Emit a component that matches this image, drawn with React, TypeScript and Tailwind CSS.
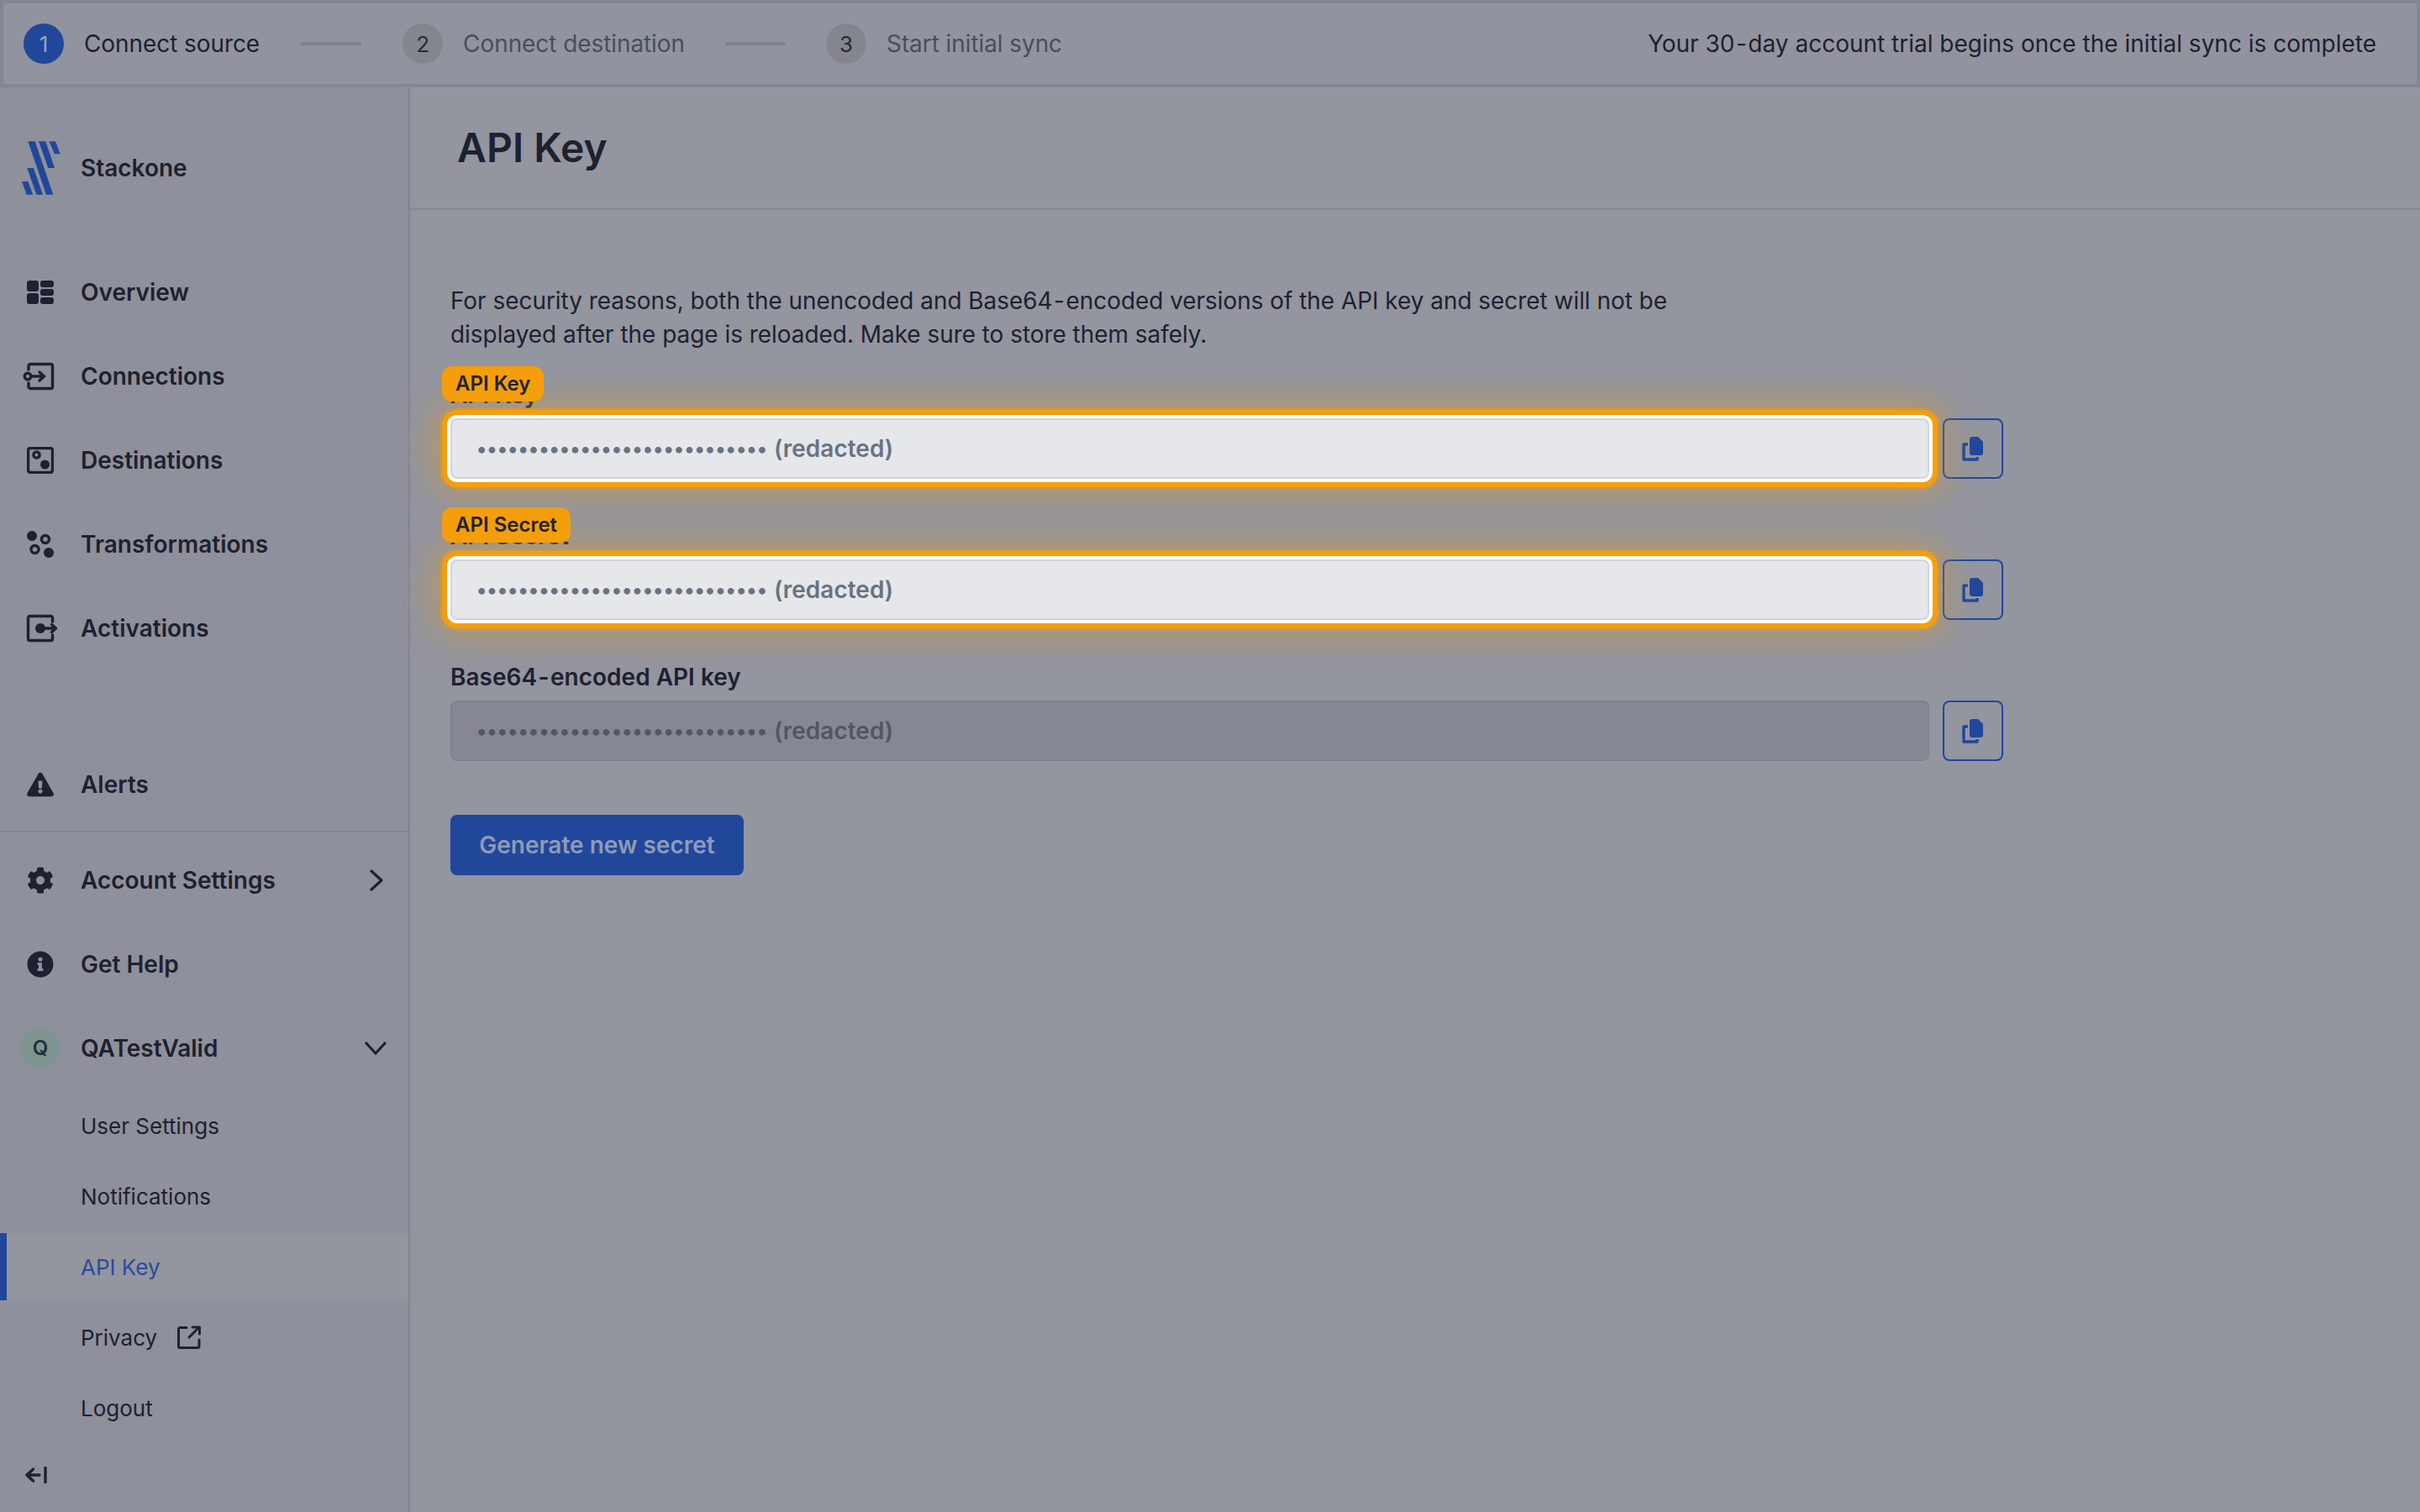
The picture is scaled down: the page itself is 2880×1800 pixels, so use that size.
import React from "react";
import { FaCog, FaInfoCircle, FaExclamationTriangle } from "react-icons/fa";

const DARK = "#1e2130";

function LogoMark() {
  return (
    <svg width="46" height="64" viewBox="26 168 46 64" fill="#21479b">
      <polygon points="33.3,168.3 41.7,168.3 63.3,231.7 55,231.7" />
      <polygon points="46,168.3 54.3,168.3 65,200 57.3,200" />
      <polygon points="58.3,168.3 66,168.3 71.7,183.3 65,183.3" />
      <polygon points="32.3,200 40,200 51,231.7 43.3,231.7" />
      <polygon points="26,216 33.3,216 39.3,231.7 31.7,231.7" />
    </svg>
  );
}

function OverviewIcon() {
  return (
    <svg width="32" height="32" viewBox="0 0 32 32" fill={DARK}>
      <rect x="0" y="2" width="14" height="13" rx="3" />
      <rect x="0" y="17" width="14" height="13" rx="3" />
      <rect x="16" y="2" width="16" height="8" rx="3" />
      <rect x="16" y="12" width="16" height="8" rx="3" />
      <rect x="16" y="22" width="16" height="8" rx="3" />
    </svg>
  );
}

function ConnectionsIcon() {
  return (
    <svg width="32" height="32" viewBox="0 0 32 32" fill="none" stroke={DARK} strokeWidth="3.4" strokeLinecap="round" strokeLinejoin="round" className="overflow-visible">
      <path d="M2 8V3.5A2 2 0 0 1 4 1.5H28.5A2 2 0 0 1 30.5 3.5V28.5A2 2 0 0 1 28.5 30.5H4A2 2 0 0 1 2 28.5V24" />
      <circle cx="1" cy="16" r="3.8" />
      <path d="M5 16H20M15 11L20.5 16L15 21" />
    </svg>
  );
}

function DestinationsIcon() {
  return (
    <svg width="32" height="32" viewBox="0 0 32 32" fill="none" stroke={DARK} strokeWidth="3.4">
      <rect x="1.5" y="1.5" width="29" height="29" rx="2.5" />
      <circle cx="11.5" cy="9.5" r="3.6" />
      <circle cx="21.5" cy="21" r="5.5" fill={DARK} stroke="none" />
    </svg>
  );
}

function TransformationsIcon() {
  return (
    <svg width="32" height="32" viewBox="0 0 32 32" fill="none" stroke={DARK} strokeWidth="3.4">
      <circle cx="6" cy="6" r="6" fill={DARK} stroke="none" />
      <circle cx="22" cy="10" r="4.5" />
      <circle cx="9.5" cy="22" r="4.5" />
      <circle cx="26" cy="26" r="6" fill={DARK} stroke="none" />
    </svg>
  );
}

function ActivationsIcon() {
  return (
    <svg width="32" height="32" viewBox="0 0 32 32" fill="none" stroke={DARK} strokeWidth="3.4" strokeLinecap="round" strokeLinejoin="round" className="overflow-visible">
      <path d="M30.5 8V3.5A2 2 0 0 0 28.5 1.5H3.5A2 2 0 0 0 1.5 3.5V28.5A2 2 0 0 0 3.5 30.5H28.5A2 2 0 0 0 30.5 28.5V24" />
      <circle cx="16" cy="16" r="6" fill={DARK} stroke="none" />
      <path d="M20 16H34M29.5 11.5L34.5 16L29.5 20.5" />
    </svg>
  );
}

function ChevronRight() {
  return (
    <svg width="16" height="26" viewBox="0 0 16 26" fill="none" stroke={DARK} strokeWidth="3.2" strokeLinecap="round" strokeLinejoin="round" className="ml-[2px]">
      <path d="M2 2L14 13L2 24" />
    </svg>
  );
}

function ChevronDown() {
  return (
    <svg width="26" height="16" viewBox="0 0 26 16" fill="none" stroke={DARK} strokeWidth="3.2" strokeLinecap="round" strokeLinejoin="round">
      <path d="M2 2L13 14L24 2" />
    </svg>
  );
}

function ExternalIcon() {
  return (
    <svg width="28" height="28" viewBox="0 0 28 28" fill="none" stroke={DARK} strokeWidth="3" strokeLinecap="round" strokeLinejoin="round">
      <path d="M11 2.5H3.5A2 2 0 0 0 1.5 4.5V24.5A2 2 0 0 0 3.5 26.5H24A2 2 0 0 0 26 24.5V17" />
      <path d="M14 14L26 2M18 2H26.5V10" />
    </svg>
  );
}

function CollapseIcon() {
  return (
    <svg width="26" height="20" viewBox="0 0 26 20" fill="none" stroke={DARK} strokeWidth="3.4" strokeLinecap="round" strokeLinejoin="round">
      <path d="M2 10H17M9.5 3L2 10L9.5 17M24 1.5V18.5" />
    </svg>
  );
}

function CopyIcon() {
  return (
    <svg width="26" height="29" viewBox="0 0 26 29" fill="none">
      <path d="M12 0H19L25 6V19A3 3 0 0 1 22 22H12A3 3 0 0 1 9 19V3A3 3 0 0 1 12 0Z" fill="#21479b" />
      <path d="M7 9H2V27H18V24" stroke="#21479b" strokeWidth="3.5" strokeLinejoin="round" />
    </svg>
  );
}

function Hyphen() {
  return <span className="mx-[1.5px]">-</span>;
}

function Step({ n, label, active }: { n: number; label: string; active?: boolean }) {
  return (
    <div className="flex items-center gap-6">
      <div
        className={
          active
            ? "flex h-12 w-12 items-center justify-center rounded-full bg-[#21479b] text-[26px] text-[#98a4c4]"
            : "flex h-12 w-12 items-center justify-center rounded-full bg-[#83868f] text-[26px] text-[#262935]"
        }
      >
        {n}
      </div>
      <span className={active ? "text-[28px] tracking-[-0.08px] text-[#1e2130]" : "text-[28px] tracking-[-0.08px] text-[#4a4e5b]"}>{label}</span>
    </div>
  );
}

function StepLine({ first }: { first?: boolean }) {
  return <div className={first ? "mx-[49px] h-1 w-[72px] bg-[#81848f]" : "mx-12 h-1 w-[72px] bg-[#81848f]"} />;
}

function NavRow({ icon, label, trailing }: { icon: React.ReactNode; label: string; trailing?: React.ReactNode }) {
  return (
    <div className="relative flex h-[100px] items-center pl-8 pr-[23px]">
      <div className="flex h-8 w-8 shrink-0 items-center justify-center">{icon}</div>
      <span className="ml-8 text-[28px] font-semibold text-[#1e2130]">{label}</span>
      {trailing ? <div className="ml-auto flex w-[32px] justify-center">{trailing}</div> : null}
    </div>
  );
}

function SubRow({ label, active, trailing }: { label: string; active?: boolean; trailing?: React.ReactNode }) {
  return (
    <div
      className={
        active
          ? "flex h-20 items-center border-l-8 border-[#21479b] bg-[#93959f] pl-[88px] text-[26px] text-[#2a4c9c]"
          : "flex h-20 items-center pl-24 text-[26px] text-[#1e2130]"
      }
    >
      <span>{label}</span>
      {trailing}
    </div>
  );
}

function RedactedBox({ highlight }: { highlight?: boolean }) {
  return (
    <div
      className={
        highlight
          ? "relative flex h-[72px] w-[1760px] items-center rounded-lg border-2 border-[#d2d4db] bg-[#e5e7eb] pl-[29px] text-[28px] font-semibold text-[#6b7280] shadow-[0_0_0_4px_#ffffff,0_0_0_10px_#f59e0b,0_0_0_12px_rgba(245,158,11,0.4),0_0_40px_16px_rgba(245,158,11,0.45)]"
          : "flex h-[72px] w-[1760px] items-center rounded-lg border-2 border-[#7f828e] bg-[#858893] pl-[29px] text-[28px] font-semibold text-[#525665]"
      }
    >
      <span className="text-[24.55px]">••••••••••••••••••••••••••••</span>
      <span className="ml-[8px]">(redacted)</span>
    </div>
  );
}

function Field({ label, highlight }: { label: React.ReactNode; highlight?: boolean }) {
  return (
    <div className="relative mb-12">
      <div className="h-10 text-[28px] font-semibold leading-10 text-[#1e2130]">{label}</div>
      <div className="mt-2 flex gap-4">
        <RedactedBox highlight={highlight} />
        <div className="flex h-[72px] w-[72px] items-center justify-center rounded-lg border-2 border-[#21479b]">
          <CopyIcon />
        </div>
      </div>
      {highlight ? (
        <div className="absolute -left-[10px] -top-[14px] rounded-xl bg-[#f59e0b] px-4 text-[24px] font-semibold leading-[42px] text-[#1f2229]">
          {label}
        </div>
      ) : null}
    </div>
  );
}

export default function App() {
  return (
    <div className="flex h-screen w-screen flex-col overflow-hidden bg-[#93959f] font-[family-name:Inter,sans-serif]">
      <header className="flex h-[104px] shrink-0 items-center justify-between border-4 border-[#828794] bg-[#91949f] pl-6 pr-12">
        <div className="flex items-center">
          <Step n={1} label="Connect source" active />
          <StepLine first />
          <Step n={2} label="Connect destination" />
          <StepLine />
          <Step n={3} label="Start initial sync" />
        </div>
        <div className="text-[28px] text-[#1e2130]">
          Your 30<Hyphen />day account trial begins once the initial sync is complete
        </div>
      </header>

      <div className="flex min-h-0 flex-1">
        <aside className="flex w-[488px] shrink-0 flex-col border-r-2 border-[#828592] bg-[#8e909b]">
          <div className="flex h-[194px] shrink-0 items-start pl-[26px] pt-16">
            <LogoMark />
            <span className="ml-6 mt-[15px] text-[28px] font-semibold leading-[34px] text-[#1e2130]">Stackone</span>
          </div>
          <NavRow icon={<OverviewIcon />} label="Overview" />
          <NavRow icon={<ConnectionsIcon />} label="Connections" />
          <NavRow icon={<DestinationsIcon />} label="Destinations" />
          <NavRow icon={<TransformationsIcon />} label="Transformations" />
          <NavRow icon={<ActivationsIcon />} label="Activations" />
          <div className="mt-[85px] border-b-2 border-[#828592] pb-[5px] pt-px">
            <NavRow icon={<FaExclamationTriangle size={32} color={DARK} />} label="Alerts" />
          </div>
          <div className="pt-[7px]">
            <NavRow icon={<FaCog size={32} color={DARK} />} label="Account Settings" trailing={<ChevronRight />} />
            <NavRow icon={<FaInfoCircle size={32} color={DARK} />} label="Get Help" />
            <NavRow
              icon={
                <div className="flex h-12 w-12 shrink-0 items-center justify-center rounded-full bg-[#7f9490] text-[24px] font-semibold text-[#1d3436]">
                  Q
                </div>
              }
              label="QATestValid"
              trailing={<ChevronDown />}
            />
          </div>
          <div className="mt-[2px] flex flex-col gap-1">
            <SubRow label="User Settings" />
            <SubRow label="Notifications" />
            <SubRow label="API Key" active />
            <SubRow
              label="Privacy"
              trailing={
                <span className="ml-6 flex">
                  <ExternalIcon />
                </span>
              }
            />
            <SubRow label="Logout" />
          </div>
          <div className="pl-[30px] pt-[30px]">
            <CollapseIcon />
          </div>
        </aside>

        <main className="min-w-0 flex-1">
          <div className="flex h-[146px] items-center border-b-2 border-[#858894] pl-14">
            <h1 className="text-[48px] font-semibold text-[#1e2130]">API Key</h1>
          </div>
          <div className="pl-12 pt-[88px]">
            <p className="mb-8 w-[1480px] text-[28px] leading-10 tracking-[-0.05px] text-[#1e2130]">
              For security reasons, both the unencoded and Base64<Hyphen />encoded versions of the API key and secret will not be displayed after the page is reloaded. Make sure to store them safely.
            </p>
            <Field label="API Key" highlight />
            <Field label="API Secret" highlight />
            <Field label={<>Base64<Hyphen />encoded API key</>} />
            <button className="mt-4 h-[72px] w-[349px] rounded-lg bg-[#21479b] text-[28px] font-semibold text-[#8f9ab7]">
              Generate new secret
            </button>
          </div>
        </main>
      </div>
    </div>
  );
}
